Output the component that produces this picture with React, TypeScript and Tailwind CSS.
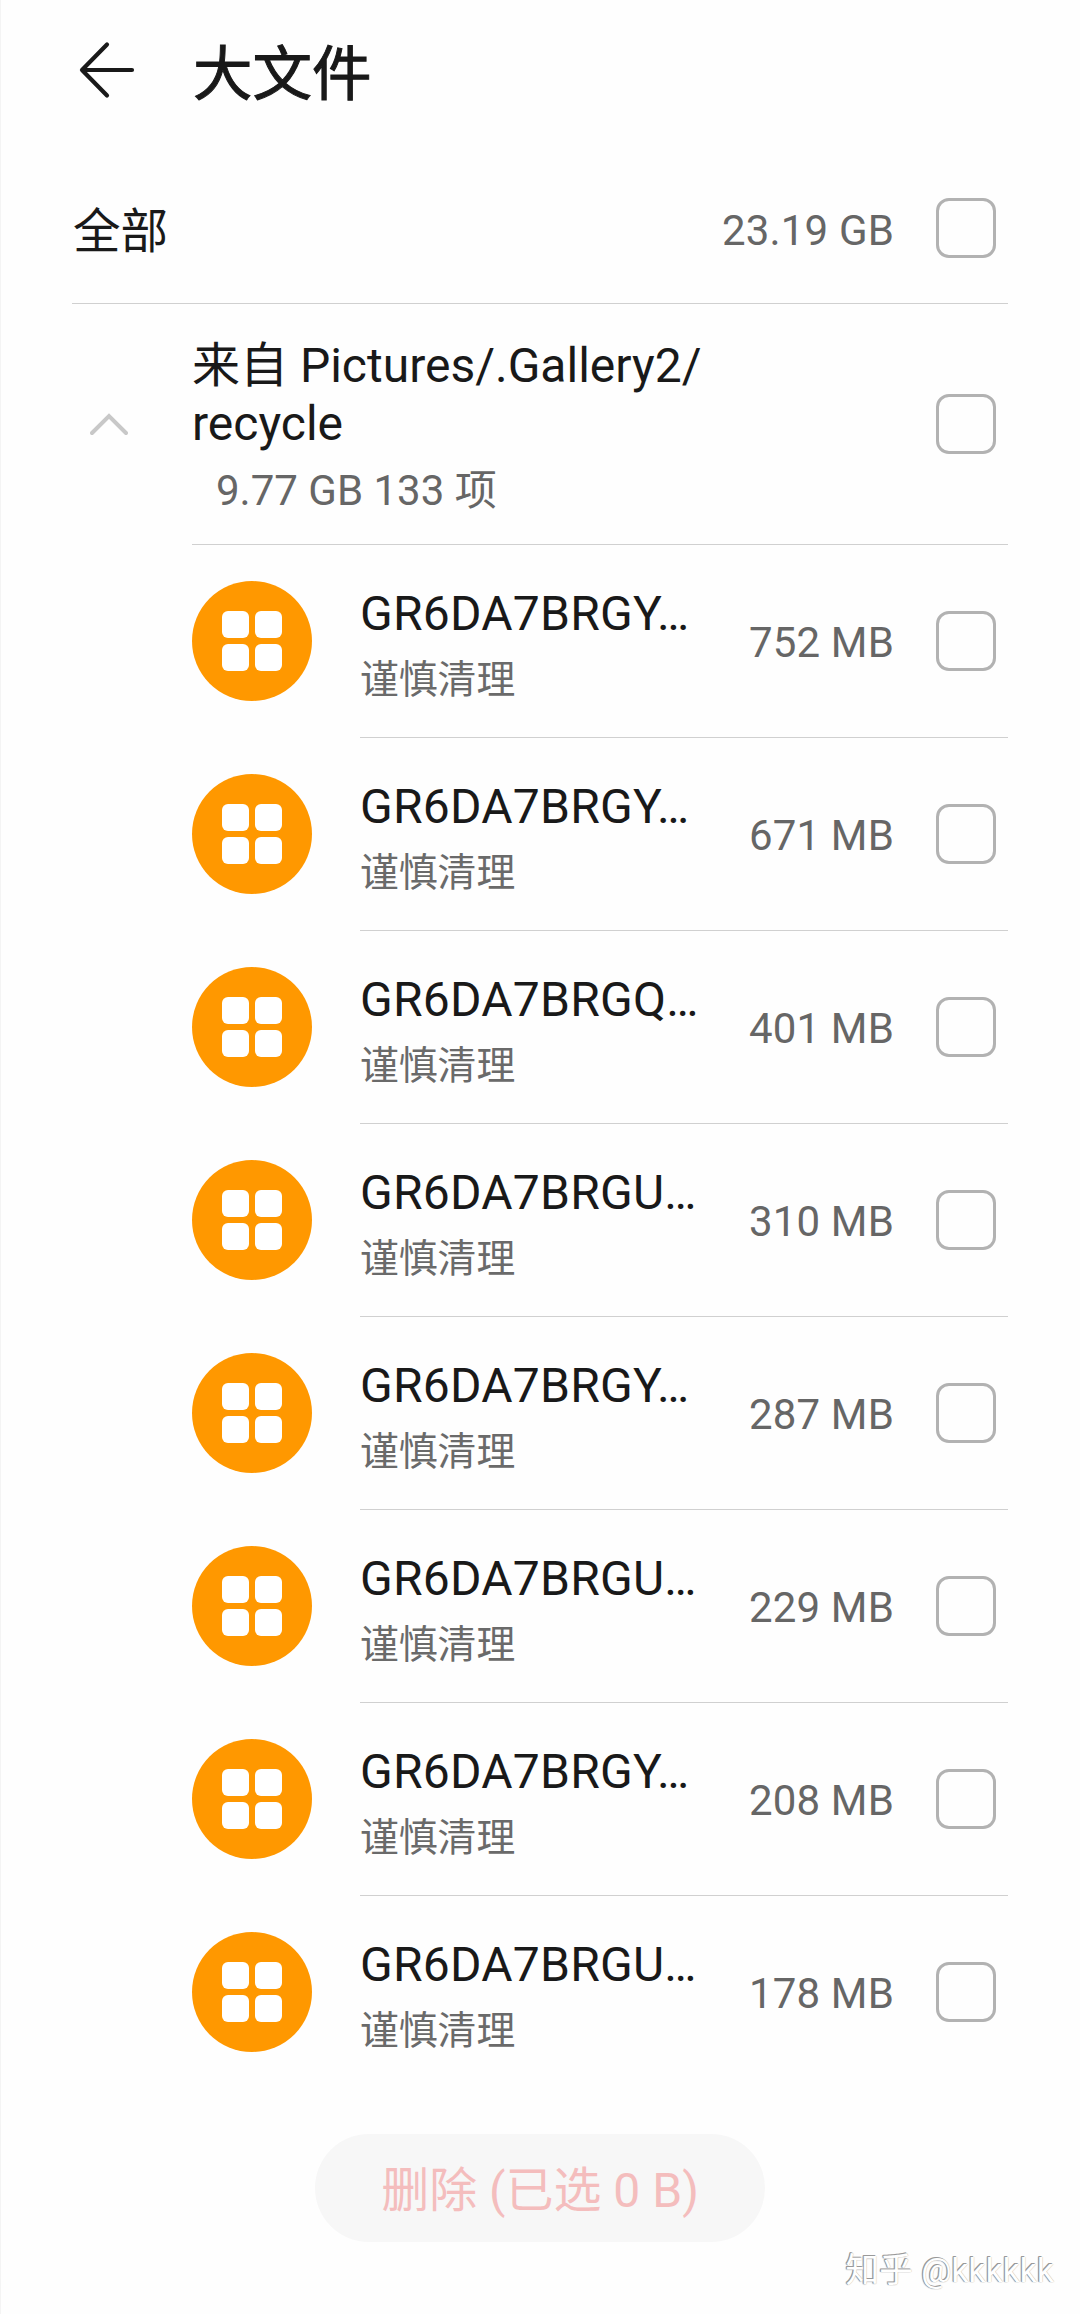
interface FileItem {
  name: string;
  size: string;
}

const files: FileItem[] = [
  { name: "GR6DA7BRGY…", size: "752 MB" },
  { name: "GR6DA7BRGY…", size: "671 MB" },
  { name: "GR6DA7BRGQ…", size: "401 MB" },
  { name: "GR6DA7BRGU…", size: "310 MB" },
  { name: "GR6DA7BRGY…", size: "287 MB" },
  { name: "GR6DA7BRGU…", size: "229 MB" },
  { name: "GR6DA7BRGY…", size: "208 MB" },
  { name: "GR6DA7BRGU…", size: "178 MB" },
];

function Checkbox() {
  return (
    <span
      role="checkbox"
      aria-checked={false}
      className="mr-3 size-[60px] shrink-0 rounded-[13px] border-3 border-[#b2b2b2]"
    />
  );
}

function SizeLabel({ children }: { children: string }) {
  return (
    <span className="mt-1 mr-[42px] text-[42px] leading-[50px] tracking-[0.15px] text-[#666]">
      {children}
    </span>
  );
}

function BackIcon() {
  return (
    <svg
      className="size-[60px]"
      viewBox="0 0 60 60"
      fill="none"
      stroke="currentColor"
      strokeWidth="4.2"
      strokeLinecap="round"
      strokeLinejoin="round"
    >
      <path d="M55 30H5M30 4.500L5 30L30 55.500" />
    </svg>
  );
}

function AppIcon() {
  return (
    <span className="mb-px grid size-[120px] shrink-0 grid-cols-2 gap-1.5 rounded-full bg-[#ff9800] p-[30px]">
      <span className="rounded-[6px] bg-white" />
      <span className="rounded-[6px] bg-white" />
      <span className="rounded-[6px] bg-white" />
      <span className="rounded-[6px] bg-white" />
    </span>
  );
}

function FileRow({ name, size }: FileItem) {
  return (
    <li className="group flex h-[193px] pl-[120px]">
      <div className="flex items-center pr-12">
        <AppIcon />
      </div>
      <div className="flex flex-1 items-center border-b border-[#d0d0d0] group-last:border-transparent">
        <div className="flex-1 pt-2">
          <p className="text-[48px] leading-[58px] tracking-[0.25px]">{name}</p>
          <p className="mt-3 text-[38.8px] leading-[50px] text-[#6a6a6a]">谨慎清理</p>
        </div>
        <SizeLabel>{size}</SizeLabel>
        <Checkbox />
      </div>
    </li>
  );
}

export default function App() {
  return (
    <div className="relative h-[2314px] w-[1080px] overflow-hidden border-l border-[#f4f4f4] bg-[#fefefe] pr-[72px] pl-[71px] font-[Roboto,'Noto_Sans_CJK_SC',sans-serif] whitespace-nowrap text-[#191919]">
      <header className="flex h-[153px] items-start">
        <button className="mt-10 ml-[5px]" aria-label="返回">
          <BackIcon />
        </button>
        <h1 className="mt-[39px] ml-14 text-[59.5px] leading-[72px] [-webkit-text-stroke:1px_#191919]">
          大文件
        </h1>
      </header>

      <section className="flex h-[151px] items-center border-b border-[#d0d0d0]">
        <h2 className="flex-1 pt-[7px] pl-px text-[47.5px] leading-[58px]">全部</h2>
        <div className="flex pt-0.5">
          <SizeLabel>23.19 GB</SizeLabel>
        </div>
        <Checkbox />
      </section>

      <section className="flex h-[241px]">
        <div className="flex w-[120px] items-center pb-[2px] pl-[18px]">
          <svg
            className="h-6 w-[38px]"
            viewBox="0 0 38 24"
            fill="none"
            stroke="#c8c8c8"
            strokeWidth="4"
            strokeLinecap="round"
          >
            <path d="M2 21L19 4L36 21" />
          </svg>
        </div>
        <div className="flex flex-1 items-center border-b border-[#d0d0d0]">
          <div className="flex-1 pt-[5px]">
            <p className="text-[48px] leading-[58px]">
              来自 Pictures/.Gallery2/
              <br />
              recycle
            </p>
            <p className="mt-[13px] pl-6 text-[42px] leading-[50px] text-[#666]">9.77 GB 133 项</p>
          </div>
          <Checkbox />
        </div>
      </section>

      <ul>
        {files.map((file, i) => (
          <FileRow key={i} {...file} />
        ))}
      </ul>

      <footer className="mt-[45px] flex justify-center">
        <button className="h-[108px] w-[450px] rounded-full bg-[#f7f7f7] pt-1.5 text-[48px] leading-[58px] text-[#f4bdbd]">
          删除 (已选 0 B)
        </button>
      </footer>

      {/* Watermark over the bottom corner */}
      <span className="absolute right-[26px] bottom-[23px] text-[33.7px] leading-10 text-white [text-shadow:-1px_-1px_0_#999,-1px_0_1px_#888,0_0_1px_#aaa]">
        知乎 @kkkkkk
      </span>
    </div>
  );
}
